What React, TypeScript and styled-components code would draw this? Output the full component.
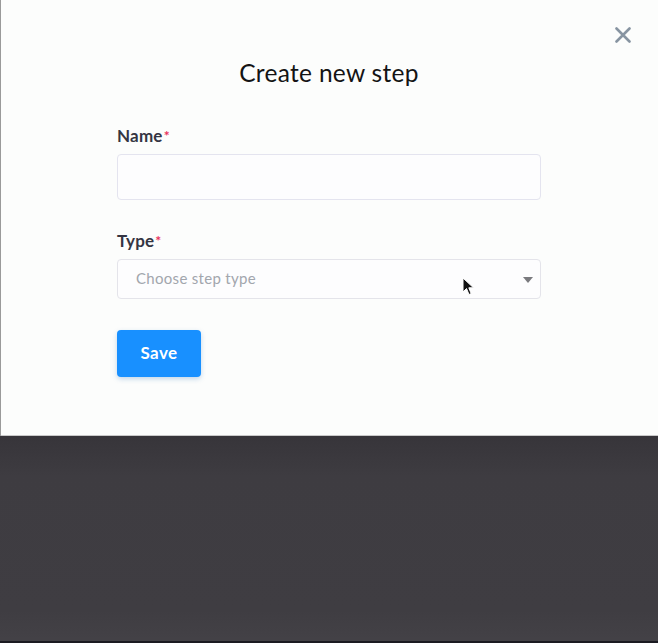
import styled, { createGlobalStyle } from "styled-components";
import { ReactElement } from "react";

const GlobalStyle = createGlobalStyle`
    html, body {
        margin: 0;
        padding: 0;
    }

    body {
        font-family: "Lato", "Open Sans", sans-serif;
        background-color: #3d3b40;
    }

    * {
        box-sizing: border-box;
    }
`;

const Page = styled.div`
    width: 658px;
    height: 643px;
    display: flex;
    flex-direction: column;
    overflow: hidden;
`;

const ModalLayout = styled.div`
    position: relative;
    height: 436px;
    background-color: #fcfdfc;
    box-shadow: inset 1px 0 0 #9a9a9a, inset 0 -1px 0 #c9c9c9;
    padding-top: 57px;
`;

const Backdrop = styled.div`
    flex: 1;
    background: linear-gradient(180deg, #37353a 0%, #3e3c41 20%, #3f3d42 85%, #434146 99%);
    border-bottom: 2px solid #1b1a21;
`;

const CloseButton = styled.button`
    position: absolute;
    top: 25px;
    right: 25px;
    width: 20px;
    height: 20px;
    padding: 0;
    border: none;
    background: transparent;
    display: flex;
    align-items: center;
    justify-content: center;
    cursor: pointer;
`;

const Title = styled.h2`
    margin: 0;
    text-align: center;
    font-size: 24.5px;
    line-height: 32px;
    font-weight: 400;
    color: #141414;
    letter-spacing: 0.3px;
`;

const Form = styled.form`
    width: 424px;
    margin: 37px auto 0;
    display: flex;
    flex-direction: column;
    align-items: flex-start;
`;

const Field = styled.div`
    width: 100%;
    display: flex;
    flex-direction: column;
    gap: 8px;
    margin-bottom: 31px;
`;

const Label = styled.label`
    font-size: 17px;
    line-height: 20px;
    font-weight: 700;
    color: #343543;
    letter-spacing: 0.2px;

    .required {
        color: #e8315b;
        font-size: 14px;
        vertical-align: top;
        margin-left: 1px;
    }
`;

const TextInput = styled.input`
    width: 100%;
    height: 46px;
    border: 1px solid #e4e4ef;
    border-radius: 4px;
    background-color: #fdfdfe;
    padding: 0 18px;
    font-size: 15px;
    font-family: inherit;
    outline: none;
`;

const SelectBox = styled.div`
    position: relative;
    width: 100%;
    height: 40px;
    border: 1px solid #e4e4ea;
    border-radius: 4px;
    background-color: #fdfdfe;
    display: flex;
    align-items: center;
    justify-content: space-between;
    padding: 0 7px 0 18px;
`;

const Placeholder = styled.span`
    font-size: 15px;
    color: #a2a6ad;
    letter-spacing: 0.3px;
    margin-top: -3px;
`;

const Caret = styled.span`
    width: 0;
    height: 0;
    border-left: 5px solid transparent;
    border-right: 5px solid transparent;
    border-top: 6px solid #7a7a7e;
    margin-top: 2px;
`;

const Pointer = styled.svg`
    position: absolute;
    left: 344px;
    top: 17px;
`;

const SaveButton = styled.button`
    width: 84px;
    height: 47px;
    border: none;
    border-radius: 4px;
    background-color: #1890ff;
    color: #ffffff;
    font-family: inherit;
    font-size: 17px;
    font-weight: 700;
    letter-spacing: 0.4px;
    padding: 0 0 2px;
    box-shadow: 0 2px 5px rgba(24, 100, 180, 0.25);
    cursor: pointer;
`;

const App = (): ReactElement => {
    return (
        <>
            <GlobalStyle />
            <Page>
                <ModalLayout>
                    <CloseButton type={"button"} aria-label={"close"}>
                        <svg width={16} height={16} viewBox={"0 0 16 16"}>
                            <path
                                d={"M1.5 1.5 L14.5 14.5 M14.5 1.5 L1.5 14.5"}
                                stroke={"#8794a1"}
                                strokeWidth={2.6}
                                strokeLinecap={"round"}
                            />
                        </svg>
                    </CloseButton>
                    <Title>Create new step</Title>
                    <Form onSubmit={(e) => e.preventDefault()}>
                        <Field>
                            <Label>
                                Name<span className={"required"}>*</span>
                            </Label>
                            <TextInput type={"text"} />
                        </Field>
                        <Field>
                            <Label>
                                Type<span className={"required"}>*</span>
                            </Label>
                            <SelectBox>
                                <Placeholder>Choose step type</Placeholder>
                                <Caret />
                                <Pointer width={13} height={20} viewBox={"0 0 13 20"}>
                                    <path
                                        d={"M1 1 L1 15 L4.5 11.5 L7 17.5 L9.2 16.6 L6.8 10.8 L11.5 10.8 Z"}
                                        fill={"#111"}
                                        stroke={"#fff"}
                                        strokeWidth={1}
                                    />
                                </Pointer>
                            </SelectBox>
                        </Field>
                        <SaveButton type={"submit"}>Save</SaveButton>
                    </Form>
                </ModalLayout>
                <Backdrop />
            </Page>
        </>
    );
};

export default App;
